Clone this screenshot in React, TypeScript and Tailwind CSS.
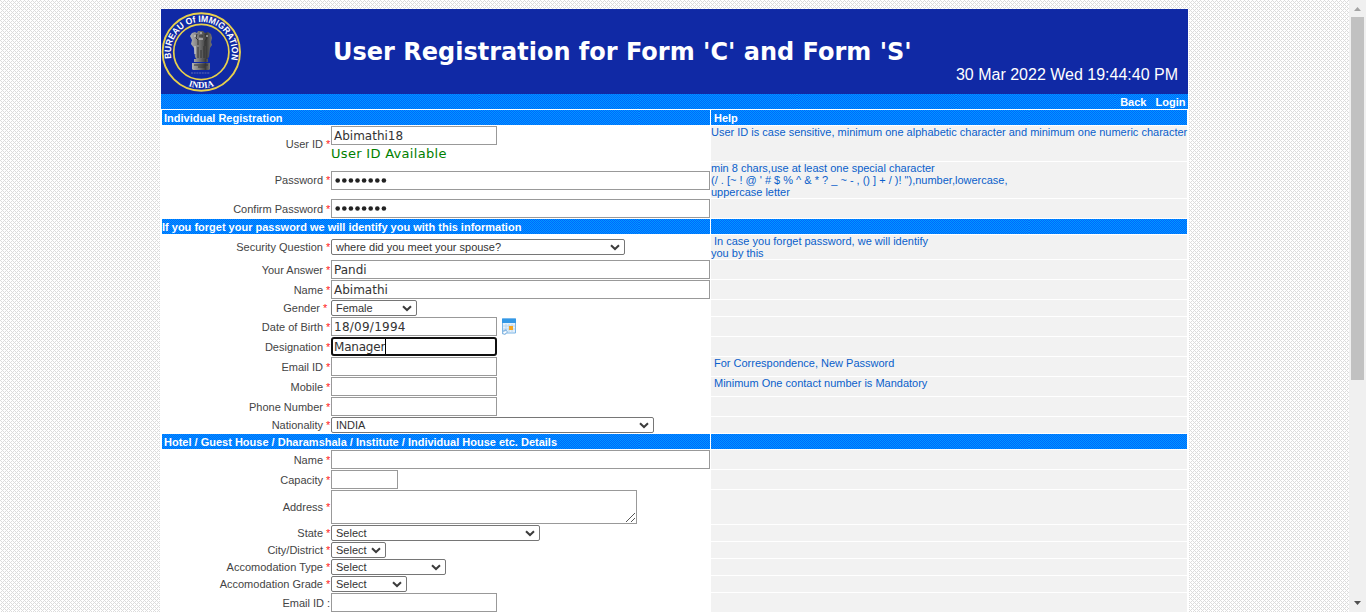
import type { ReactNode } from "react";

const sans = "font-['Liberation_Sans',Arial,sans-serif]";
const verdana = "font-['DejaVu_Sans',Verdana,sans-serif]";

function Stripe({ children, className = "" }: { children?: ReactNode; className?: string }) {
  return (
    <div className={`relative h-[15px] overflow-hidden ${className}`}>
      <div className="absolute inset-0 flex">
        {[0, 1, 2, 3, 4, 5, 6].map((i) => (
          <div
            key={i}
            className="h-[15px] w-[159px] shrink-0 bg-[repeating-conic-gradient(#0066ff_0_25%,#0099ff_0_50%)] bg-[length:2px_2px]"
          />
        ))}
      </div>
      <div className="relative h-full whitespace-nowrap text-[11px] leading-[16px] font-bold text-white">{children}</div>
    </div>
  );
}

function Section({ title, help, flush }: { title: string; help?: string; flush?: boolean }) {
  return (
    <div className="flex gap-px">
      <Stripe className="w-[548px]">
        <span className={flush ? "" : "pl-[2px]"}>{title}</span>
      </Stripe>
      <Stripe className="w-[476px]">
        <span className="pl-[3px]">{help}</span>
      </Stripe>
    </div>
  );
}

function Row({ label, h, mark = "*", shift = "pr-px", children, help }: {
  label: string; h: string; mark?: string; shift?: string; children: ReactNode; help?: ReactNode;
}) {
  return (
    <div className={`flex gap-px ${h}`}>
      <div className="flex w-[548px] items-center">
        <div className={`flex w-[169px] shrink-0 justify-end gap-[3px] text-[11px] leading-[12px] text-[#444] ${shift}`}>
          <span>{label}</span>
          <span className={mark === "*" ? "w-[4px] text-[#ff2020]" : "w-[3px]"}>{mark}</span>
        </div>
        {children}
      </div>
      <div className="w-[476px] bg-[#f2f2f2] text-[11px] leading-[12px] whitespace-nowrap text-[#0a5fcb]">{help}</div>
    </div>
  );
}

function Field({ w = "w-[166px]", value, focused, tracking = "" }: {
  w?: string; value?: string; focused?: boolean; tracking?: string;
}) {
  return (
    <div
      className={`flex h-[19px] shrink-0 items-center bg-white text-[12px] text-[#333] ${verdana} ${w} ${tracking} ${
        focused ? "rounded-[3px] border-2 border-[#101010] pl-px" : "border border-[#999] pl-[2px]"
      }`}
    >
      <span>{value}</span>
      {focused && <span className="h-[15px] w-px bg-black" />}
    </div>
  );
}

function Password() {
  return (
    <div className="flex h-[19px] w-[379px] shrink-0 items-center border border-[#999] bg-white pl-[3px]">
      <svg width="54" height="7" viewBox="0 0 54 7" fill="#222">
        {[0, 1, 2, 3, 4, 5, 6, 7].map((i) => (
          <circle key={i} cx={2.7 + i * 6.6} cy="3.5" r="2.3" />
        ))}
      </svg>
    </div>
  );
}

function Select({ w, value }: { w: string; value: string }) {
  return (
    <div className={`flex h-[16px] shrink-0 items-center justify-between rounded-[2px] border border-[#767676] bg-white pr-[4px] pl-[4px] text-[11px] leading-[14px] text-[#333] ${w}`}>
      <span>{value}</span>
      <svg width="10" height="7" viewBox="0 0 10 7" fill="none" stroke="#3c3c3c" strokeWidth="2">
        <path d="M1 1.2 5 5 9 1.2" />
      </svg>
    </div>
  );
}

function Weave() {
  return (
    <svg width="1349" height="612" className="absolute top-0 left-0" shapeRendering="crispEdges">
      <defs>
        <pattern id="weave" width="4" height="4" patternUnits="userSpaceOnUse">
          <path fill="#fff" d="M0 0h4v4H0z" />
          <path fill="#dcdcdc" d="M0 0h1v1H0zM1 1h1v1H1zM3 1h1v1H3zM2 2h1v1H2zM1 3h1v1H1zM3 3h1v1H3z" />
        </pattern>
      </defs>
      <rect width="1349" height="612" fill="url(#weave)" />
    </svg>
  );
}

function Emblem() {
  return (
    <svg width="80" height="84" viewBox="0 0 80 84" className="shrink-0">
      <defs>
        <path id="arc-top" d="M10.4 49.5A30.5 30.5 0 1 1 70.2 49.5" />
        <path id="arc-bottom" d="M16 70A36.4 36.4 0 0 0 64.6 70" />
        <linearGradient id="stone" x1="0" x2="1">
          <stop offset="0" stopColor="#b4b4b4" />
          <stop offset=".4" stopColor="#777" />
          <stop offset=".75" stopColor="#3c3c3c" />
          <stop offset="1" stopColor="#777" />
        </linearGradient>
      </defs>
      <circle cx="40.3" cy="43" r="38.7" fill="none" stroke="#e8d04c" strokeWidth="1.9" />
      <circle cx="40.3" cy="43" r="27.6" fill="none" stroke="#e8d04c" strokeWidth="1.7" />
      <text fill="#fff" fontSize="9.2" fontWeight="bold" fontFamily="Liberation Sans">
        <textPath href="#arc-top" textLength="109" lengthAdjust="spacingAndGlyphs">BUREAU Of IMMIGRATION</textPath>
      </text>
      <text fill="#fff" fontSize="9" fontWeight="bold" fontFamily="Liberation Serif" textAnchor="middle">
        <textPath href="#arc-bottom" startOffset="50%">INDIA</textPath>
      </text>
      <g fill="url(#stone)">
        <path d="M29 27l2-3 3-1 2 1 1-2h5l2 2 3-1 3 2 1 4-1 4 1 3-2 3-1 9-3 3H36l-2-3-1-9-3-4 1-4z" />
        <path d="M33 50h14v3H33zM31 54h18v6l-1 1H32l-1-1z" />
      </g>
      <path d="M36 25l-1 4 2 2v5M44 25l2 4-2 3v5M38 27h4M37 38v11M43 37v12M40 41v8" stroke="#333" fill="none" />
      <path d="M33 27h2M45 27h2M38 30h4M34 37v8M39 24h2" stroke="#ddd" fill="none" />
      <path d="M33 56h14M37 58h7" stroke="#333" />
      <path d="M30 64h19" stroke="#4456b0" strokeWidth="1.6" strokeDasharray="2 .7" />
    </svg>
  );
}

function CalendarIcon() {
  return (
    <svg width="16" height="18" viewBox="0 0 16 18" className="ml-[4px] shrink-0">
      <path d="M1.5 1h13v14h-13z" fill="#e5f1fb" stroke="#7bb5e6" />
      <path d="M1 .5h14V5H1z" fill="#3398e6" />
      <path d="M2 8h12M2 11h12M5 6v9M8 6v9M11 6v9" stroke="#bbd6ee" />
      <path d="M8 8h4v4H8z" fill="#f5a623" />
      <path d="M1 13l4-2 2 3-3 3-3-1z" fill="#88b8e2" />
      <path d="M2 14l3-1 1 1-3 2z" fill="#fff" />
    </svg>
  );
}

export default function App() {
  return (
    <div className={`relative flex h-[612px] w-[1366px] overflow-hidden bg-white ${sans}`}>
      <Weave />
      <div className="relative h-full w-[1349px] pt-[9px] pl-[160px]">
        <div className="h-full w-[1029px] bg-white">
          <div className="px-px">
            <header className="flex h-[85px] bg-[#1029a5]">
              <Emblem />
              <h1 className={`w-[700px] pt-[26px] pl-[92px] text-[24px] leading-[34px] font-bold whitespace-nowrap text-white ${verdana}`}>
                User Registration for Form 'C' and Form 'S'
              </h1>
              <div className="flex-1 pt-[57px] pr-[10px] text-right text-[16px] leading-[18px] whitespace-nowrap text-white">
                30 Mar 2022 Wed 19:44:40 PM
              </div>
            </header>
            <Stripe className="w-full">
              <div className="flex justify-end gap-[9px] pr-[2.6px]">
                <span>Back</span>
                <span>Login</span>
              </div>
            </Stripe>
          </div>
          <main className="flex flex-col gap-px px-[2px] pt-px">
            <Section title="Individual Registration" help="Help" />
            <Row label="User ID" h="h-[35px]" help="User ID is case sensitive, minimum one alphabetic character and minimum one numeric character">
              <div className="h-full">
                <Field value="Abimathi18" />
                <div className={`text-[13px] leading-[17px] tracking-[0.3px] text-[#008000] ${verdana}`}>User ID Available</div>
              </div>
            </Row>
            <Row label="Password" h="h-[36px]" help={<>min 8 chars,use at least one special character<br />{"(/ . [~ ! @ ' # $ % ^ & * ? _ ~ - , () ] + / )! \"),number,lowercase,"}<br />uppercase letter</>}>
              <Password />
            </Row>
            <Row label="Confirm Password" h="h-[19px]"><Password /></Row>
            <Section title="If you forget your password we will identify you with this information" flush />
            <Row label="Security Question" h="h-[24px]" help={<><span className="pl-[3px]">In case you forget password, we will identify</span><br />you by this</>}>
              <Select w="w-[294px]" value="where did you meet your spouse?" />
            </Row>
            <Row label="Your Answer" h="h-[19px]"><Field w="w-[379px]" value="Pandi" /></Row>
            <Row label="Name" h="h-[19px]"><Field w="w-[379px]" value="Abimathi" /></Row>
            <Row label="Gender" h="h-[16px]" shift="pr-[4px]"><Select w="w-[86px]" value="Female" /></Row>
            <Row label="Date of Birth" h="h-[19px]"><Field value="18/09/1994" tracking="tracking-[0.25px]" /><CalendarIcon /></Row>
            <Row label="Designation" h="h-[19px]"><Field value="Manager" focused tracking="tracking-[-0.2px]" /></Row>
            <Row label="Email ID" h="h-[19px]" help={<span className="pl-[3px]">For Correspondence, New Password</span>}><Field /></Row>
            <Row label="Mobile" h="h-[19px]" help={<span className="pl-[3px]">Minimum One contact number is Mandatory</span>}><Field /></Row>
            <Row label="Phone Number" h="h-[19px]"><Field /></Row>
            <Row label="Nationality" h="h-[16px]"><Select w="w-[323px]" value="INDIA" /></Row>
            <Section title="Hotel / Guest House / Dharamshala / Institute / Individual House etc. Details" />
            <Row label="Name" h="h-[19px]"><Field w="w-[379px]" /></Row>
            <Row label="Capacity" h="h-[19px]"><Field w="w-[67px]" /></Row>
            <Row label="Address" h="h-[34px]">
              <div className="flex h-[34px] w-[306px] items-end justify-end border border-[#999] bg-white p-px">
                <svg width="9" height="9" viewBox="0 0 9 9" stroke="#555" fill="none"><path d="M0 9 9 0M5 9l4-4" /></svg>
              </div>
            </Row>
            <Row label="State" h="h-[16px]"><Select w="w-[209px]" value="Select" /></Row>
            <Row label="City/District" h="h-[16px]"><Select w="w-[55px]" value="Select" /></Row>
            <Row label="Accomodation Type" h="h-[16px]"><Select w="w-[115px]" value="Select" /></Row>
            <Row label="Accomodation Grade" h="h-[16px]"><Select w="w-[76px]" value="Select" /></Row>
            <Row label="Email ID" h="h-[19px]" mark=":"><Field /></Row>
          </main>
        </div>
      </div>
      <div className="relative flex h-full w-[17px] flex-col items-center bg-[#f0f0f0]">
        <svg width="17" height="17" viewBox="0 0 17 17" className="shrink-0"><path d="M5 11 8.5 7 12 11z" fill="#a3a3a3" /></svg>
        <div className="h-[363px] w-[13px] bg-[#c1c1c1]" />
        <div className="flex-1" />
        <svg width="17" height="17" viewBox="0 0 17 17" className="shrink-0"><path d="M5 6 8.5 10 12 6z" fill="#505050" /></svg>
      </div>
    </div>
  );
}
